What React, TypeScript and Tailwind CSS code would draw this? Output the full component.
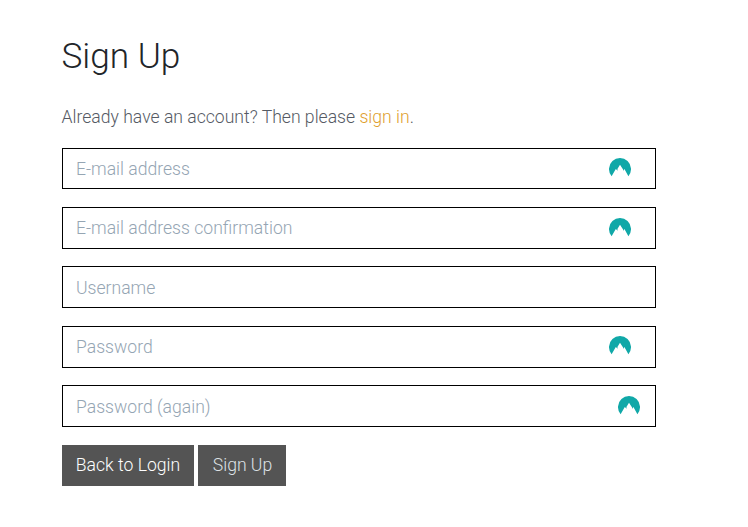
const Mark = () => (
  <svg width="22" height="20" viewBox="0 0 22 20" className="block">
    <path fill="#10a8a8" d="M2.6 18.2A11 11 0 1 1 19.4 18.2L15.4 11L14 13L14.1 11.5L11 6.7L8.4 11L8.7 12.7L6.8 11.1Z" />
  </svg>
);

const fields = [
  { label: "E-mail address", box: "mb-[18px] h-[41px] pr-6 pb-px", text: "pt-0.5", mark: true },
  { label: "E-mail address confirmation", box: "mb-[17px] h-[42px] pr-6", text: "", mark: true },
  { label: "Username", box: "mb-[18px] h-[42px] pr-6", text: "pt-0.5", mark: false },
  { label: "Password", box: "mb-[17px] h-[42px] pr-6 pb-0.5", text: "pt-0.5", mark: true },
  { label: "Password (again)", box: "mb-[18px] h-[42px] pr-[15px]", text: "pt-0.5", mark: true },
];

export default function App() {
  return (
    <main className="h-[527px] w-[748px] bg-white pt-9 pl-[62px] font-['Roboto',sans-serif] text-[17.6px] font-light">
      <h1 className="-ml-[0.5px] h-[68px] text-[35.2px] leading-[40px] font-light text-[#212529]">Sign Up</h1>
      <p className="-ml-[0.5px] h-[44px] leading-[27px] text-[#555a64]">
        Already have an account? Then please <a className="text-[#e0a030]">sign in</a>.
      </p>
      <form className="w-[594px]">
        {fields.map((f) => (
          <div key={f.label} className={`flex items-center justify-between border border-black pl-[13px] ${f.box}`}>
            <span className={`leading-[26px] text-[#95a5b3] ${f.text}`}>{f.label}</span>
            {f.mark && <Mark />}
          </div>
        ))}
        <div className="flex gap-1 leading-[26px]">
          <button type="button" className="h-[41px] w-[132px] bg-[#545454] pb-px text-white">Back to Login</button>
          <button type="button" className="h-[41px] w-[88px] bg-[#545454] pb-px pl-px text-[#dee2e6]">Sign Up</button>
        </div>
      </form>
    </main>
  );
}
